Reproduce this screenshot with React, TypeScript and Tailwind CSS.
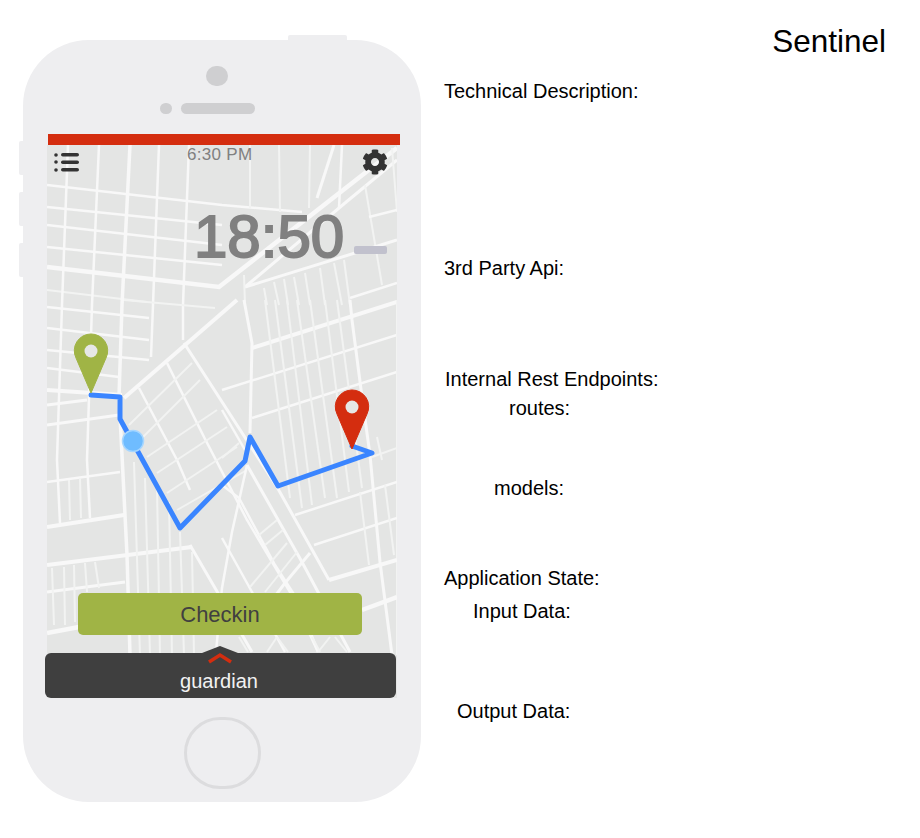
import { FaCog } from 'react-icons/fa';

type Road = [string, number];

// page coordinates, the map svg's viewBox starts at 47,145
const roads: Road[] = [
  // top left block
  ['47,185 222,205 302,212', 2.5],
  ['47,207 222,225', 2.5],
  ['47,225 222,245', 2.5],
  ['47,247 222,265', 2.5],
  ['47,267 219,287 397,148', 4.5],
  ['47,290 147,302', 2],
  ['68,145 62,305 57,460 60,523', 2.5],
  ['99,145 92,305 87,460 90,518', 2.5],
  ['130,145 122,305 119,397 122,455 127,555 130,655', 3.5],
  ['159,145 153,305 151,357', 2.5],
  ['189,145 183,305 183,340', 2.5],
  // top right block
  ['245,287 345,203 397,160', 3],
  ['334,145 317,198', 3],
  ['342,145 339,208', 2.5],
  ['310,145 309,208', 2],
  ['279,145 280,212', 2],
  ['250,145 250,208', 2],
  ['365,185 382,285', 2],
  ['392,148 397,212', 2],
  ['369,217 397,210', 2.5],
  ['245,287 397,240', 3],
  ['350,298 397,283', 2.5],
  ['264,288 267,305', 2],
  ['274,282 279,305', 2],
  ['284,279 288,305', 2],
  ['294,277 299,305', 2],
  ['305,273 310,305', 2],
  ['320,268 325,305', 2],
  ['334,263 342,305', 2],
  ['344,260 350,305', 2],
  ['244,275 245,305', 2],
  // middle right block
  ['244,300 252,343 250,433', 3],
  ['252,348 397,302', 4],
  ['222,390 397,335', 2.5],
  ['252,418 397,372', 2.5],
  ['350,300 352,320 362,397 370,455 380,562 392,655', 3],
  ['265,300 290,498', 2],
  ['275,300 302,508', 2],
  ['287,300 312,505', 2],
  ['297,300 325,498', 2],
  ['310,300 337,498', 2],
  ['325,300 349,492', 2],
  ['337,300 362,488', 2],
  ['222,410 245,450', 2.5],
  ['222,458 239,443', 2],
  ['397,300 397,655', 2],
  ['377,437 382,460', 2],
  ['372,457 397,448', 2],
  // middle left block
  ['47,307 149,318', 2.5],
  ['124,300 215,308', 2],
  ['47,328 149,340', 2.5],
  ['47,350 149,360', 2.5],
  ['47,368 119,377', 2.5],
  ['47,390 122,395', 4],
  ['47,405 87,400', 3],
  ['47,425 119,415', 3],
  ['124,398 237,300', 4],
  // diagonal grid
  ['184,343 277,487 329,580', 3],
  ['167,363 204,437 247,520 290,592 318,652', 2.5],
  ['139,388 177,460 190,490', 2.5],
  ['129,425 192,363', 2],
  ['143,437 200,380', 2],
  ['147,457 217,410', 2],
  ['157,473 227,427', 2],
  ['167,493 237,447', 2],
  ['177,510 247,470', 2],
  // bottom right block
  ['329,580 397,560', 4],
  ['247,465 302,562 350,652', 3],
  ['222,485 239,498 275,565 299,602 318,652', 2.5],
  ['247,465 232,532 222,588 216,652', 2.5],
  ['190,545 222,600 252,652', 3],
  ['222,538 252,592 285,652', 2.5],
  ['310,553 285,583 263,612', 3],
  ['259,535 277,520', 2],
  ['265,545 283,530', 2],
  ['250,587 287,543', 2],
  ['265,592 297,552', 2],
  ['295,515 397,482', 2.5],
  ['314,545 397,518', 2.5],
  ['360,492 369,565', 2],
  ['385,485 394,555', 2],
  ['362,610 397,597', 4.5],
  // bottom left block
  ['47,482 120,472', 2.5],
  ['69,480 70,520', 2],
  ['80,478 81,518', 2],
  ['47,527 124,515', 4],
  ['47,565 192,547', 4],
  ['134,462 140,655', 2],
  ['145,478 150,655', 2],
  ['157,488 160,655', 2],
  ['169,502 172,655', 2],
  ['180,532 184,655', 2],
  ['192,552 194,655', 2],
  ['47,592 125,582', 3],
  ['47,633 79,627', 4.5],
  ['52,568 54,625', 2],
  ['64,567 65,625', 2],
  ['74,565 75,622', 2],
  ['85,563 87,592', 2],
  ['95,562 99,588', 2],
  // slivers below the button
  ['239,637 248,652', 2],
  ['277,637 267,652', 2],
  ['277,637 288,652', 2],
  ['312,637 320,652', 2],
  ['335,637 347,652', 2],
  ['330,637 318,652', 2],
];

const route = '91,395 120,397 120,419 180,528 245,461 250,437 278,486 372,453 352,446';

const labelClass = 'text-[20px] leading-[24px] text-black';

function Pin({ x, y, color }: { x: number; y: number; color: string }) {
  // x,y is the centre of the pin's head
  return (
    <g>
      <path
        d={`M${x} ${y + 42} L${x - 15} ${y + 7} A16.7 16.7 0 1 1 ${x + 15} ${y + 7} Z`}
        fill={color}
        stroke={color}
        strokeLinejoin="round"
      />
      <circle cx={x} cy={y} r="6.5" fill="#e6e7e6" />
    </g>
  );
}

function MapDrawing() {
  return (
    <svg className="absolute inset-0 h-full w-full" viewBox="47 145 350 553">
      {roads.map(([points, width]) => (
        <polyline
          key={points}
          points={points}
          fill="none"
          stroke={width > 2 ? '#f8f8f8' : '#f2f3f2'}
          strokeWidth={width}
        />
      ))}
      <polyline
        points={route}
        fill="none"
        stroke="#3a85ff"
        strokeWidth="5"
        strokeLinecap="round"
        strokeLinejoin="round"
      />
      <Pin x={91} y={351} color="#a0b445" />
      <Pin x={352} y={407} color="#d42d0f" />
      <circle cx="133" cy="441" r="10.5" fill="#6fbcff" stroke="#a6d6ff" strokeWidth="1.5" />
    </svg>
  );
}

function Phone() {
  return (
    <div className="relative ml-[23px] mt-[40px] flex h-[762px] w-[398px] shrink-0 flex-col rounded-[66px] bg-[#eeeef0]">
      {/* hardware buttons */}
      <div className="absolute -top-[5px] left-[265px] h-[6px] w-[59px] rounded-t-[2px] bg-[#eeeef0]" />
      <div className="absolute -left-[4px] top-[101px] h-[34px] w-[5px] rounded-l-[2px] bg-[#eeeef0]" />
      <div className="absolute -left-[4px] top-[152px] h-[34px] w-[5px] rounded-l-[2px] bg-[#eeeef0]" />
      <div className="absolute -left-[4px] top-[203px] h-[34px] w-[5px] rounded-l-[2px] bg-[#eeeef0]" />

      {/* camera + speaker */}
      <div className="ml-[183px] mt-[26px] h-[20px] w-[22px] rounded-full bg-[#cfcfd1]" />
      <div className="ml-[137px] mt-[17px] flex items-center gap-[9px]">
        <div className="h-[11px] w-[12px] rounded-full bg-[#cfcfd1]" />
        <div className="h-[11px] w-[74px] rounded-full bg-[#cfcfd1]" />
      </div>

      {/* screen */}
      <div className="ml-[25px] mt-[20px] h-[11px] w-[352px] bg-[#d42d0f]" />
      <div className="relative ml-[24px] flex h-[553px] w-[350px] flex-col bg-[#e4e5e4]">
        <MapDrawing />
        <div className="relative flex h-[34px] shrink-0 items-start justify-between pl-[7px] pr-[9px] pt-[8px]">
          <svg width="26" height="20" viewBox="0 0 26 20" className="text-[#333333]">
            <circle cx="2" cy="2" r="1.8" fill="currentColor" />
            <circle cx="2" cy="9" r="1.8" fill="currentColor" />
            <circle cx="2" cy="17" r="1.8" fill="currentColor" />
            <rect x="7" y="0" width="18" height="3.6" rx="1.8" fill="currentColor" />
            <rect x="7" y="7.4" width="18" height="3.6" rx="1.8" fill="currentColor" />
            <rect x="7" y="15" width="18" height="3.6" rx="1.8" fill="currentColor" />
          </svg>
          <span className="absolute left-[140px] top-px text-[17px] leading-[18px] tracking-[0.3px] text-[#808080]">
            6:30 PM
          </span>
          <FaCog className="-mt-[4px] text-[26px] text-[#333333]" />
        </div>
        <div className="relative mt-[23px] flex shrink-0 items-center pl-[147px]">
          <span className="text-[60px] leading-[70px] text-[#808080] [-webkit-text-stroke:2px_#808080]">18:50</span>
          <div className="ml-[10px] mt-[26px] h-[8px] w-[33px] rounded-[2px] bg-[#c1c1cd]" />
        </div>
        <button className="relative ml-[31px] mt-[321px] h-[42px] w-[284px] shrink-0 rounded-[5px] bg-[#a0b445] text-[22px] text-[#404040]">
          Checkin
        </button>
        <div className="relative ml-[-2.5px] mt-[18px] flex h-[45px] w-[351px] shrink-0 items-end justify-center rounded-[6px] bg-[#3f3f3f] pb-[5px] pr-[2px]">
          <svg width="36" height="20" viewBox="0 0 36 20" className="absolute -top-[7px] left-[157.5px]">
            <path d="M0 7 L18 0 L36 7 Z" fill="#3f3f3f" />
            <path d="M7 16 L18 9 L29 16" fill="none" stroke="#d42d0f" strokeWidth="3.5" />
          </svg>
          <span className="text-[20px] leading-[24px] text-[#f2f2f2]">guardian</span>
        </div>
      </div>

      {/* home button */}
      <div className="ml-[161px] mt-[19px] h-[72px] w-[77px] rounded-full border-[3px] border-[#dcdcde]" />
    </div>
  );
}

function Notes() {
  return (
    <div className="ml-[23px] flex w-[445px] flex-col pr-[3px]">
      <div className="mt-[23px] text-right text-[31.5px] leading-[36px] text-black">Sentinel</div>
      <div className={`mt-[20px] ${labelClass}`}>Technical Description:</div>
      <div className={`mt-[153px] ${labelClass}`}>3rd Party Api:</div>
      <div className={`ml-px mt-[87px] ${labelClass}`}>Internal Rest Endpoints:</div>
      <div className={`ml-[65px] mt-[5px] ${labelClass}`}>routes:</div>
      <div className={`ml-[50px] mt-[56px] ${labelClass}`}>models:</div>
      <div className={`mt-[66px] ${labelClass}`}>Application State:</div>
      <div className={`ml-[29px] mt-[9px] ${labelClass}`}>Input Data:</div>
      <div className={`ml-[13px] mt-[76px] ${labelClass}`}>Output Data:</div>
    </div>
  );
}

export default function App() {
  return (
    <div className="flex h-[838px] w-[920px] overflow-hidden bg-white font-['Liberation_Sans',Arial,sans-serif]">
      <Phone />
      <Notes />
    </div>
  );
}
